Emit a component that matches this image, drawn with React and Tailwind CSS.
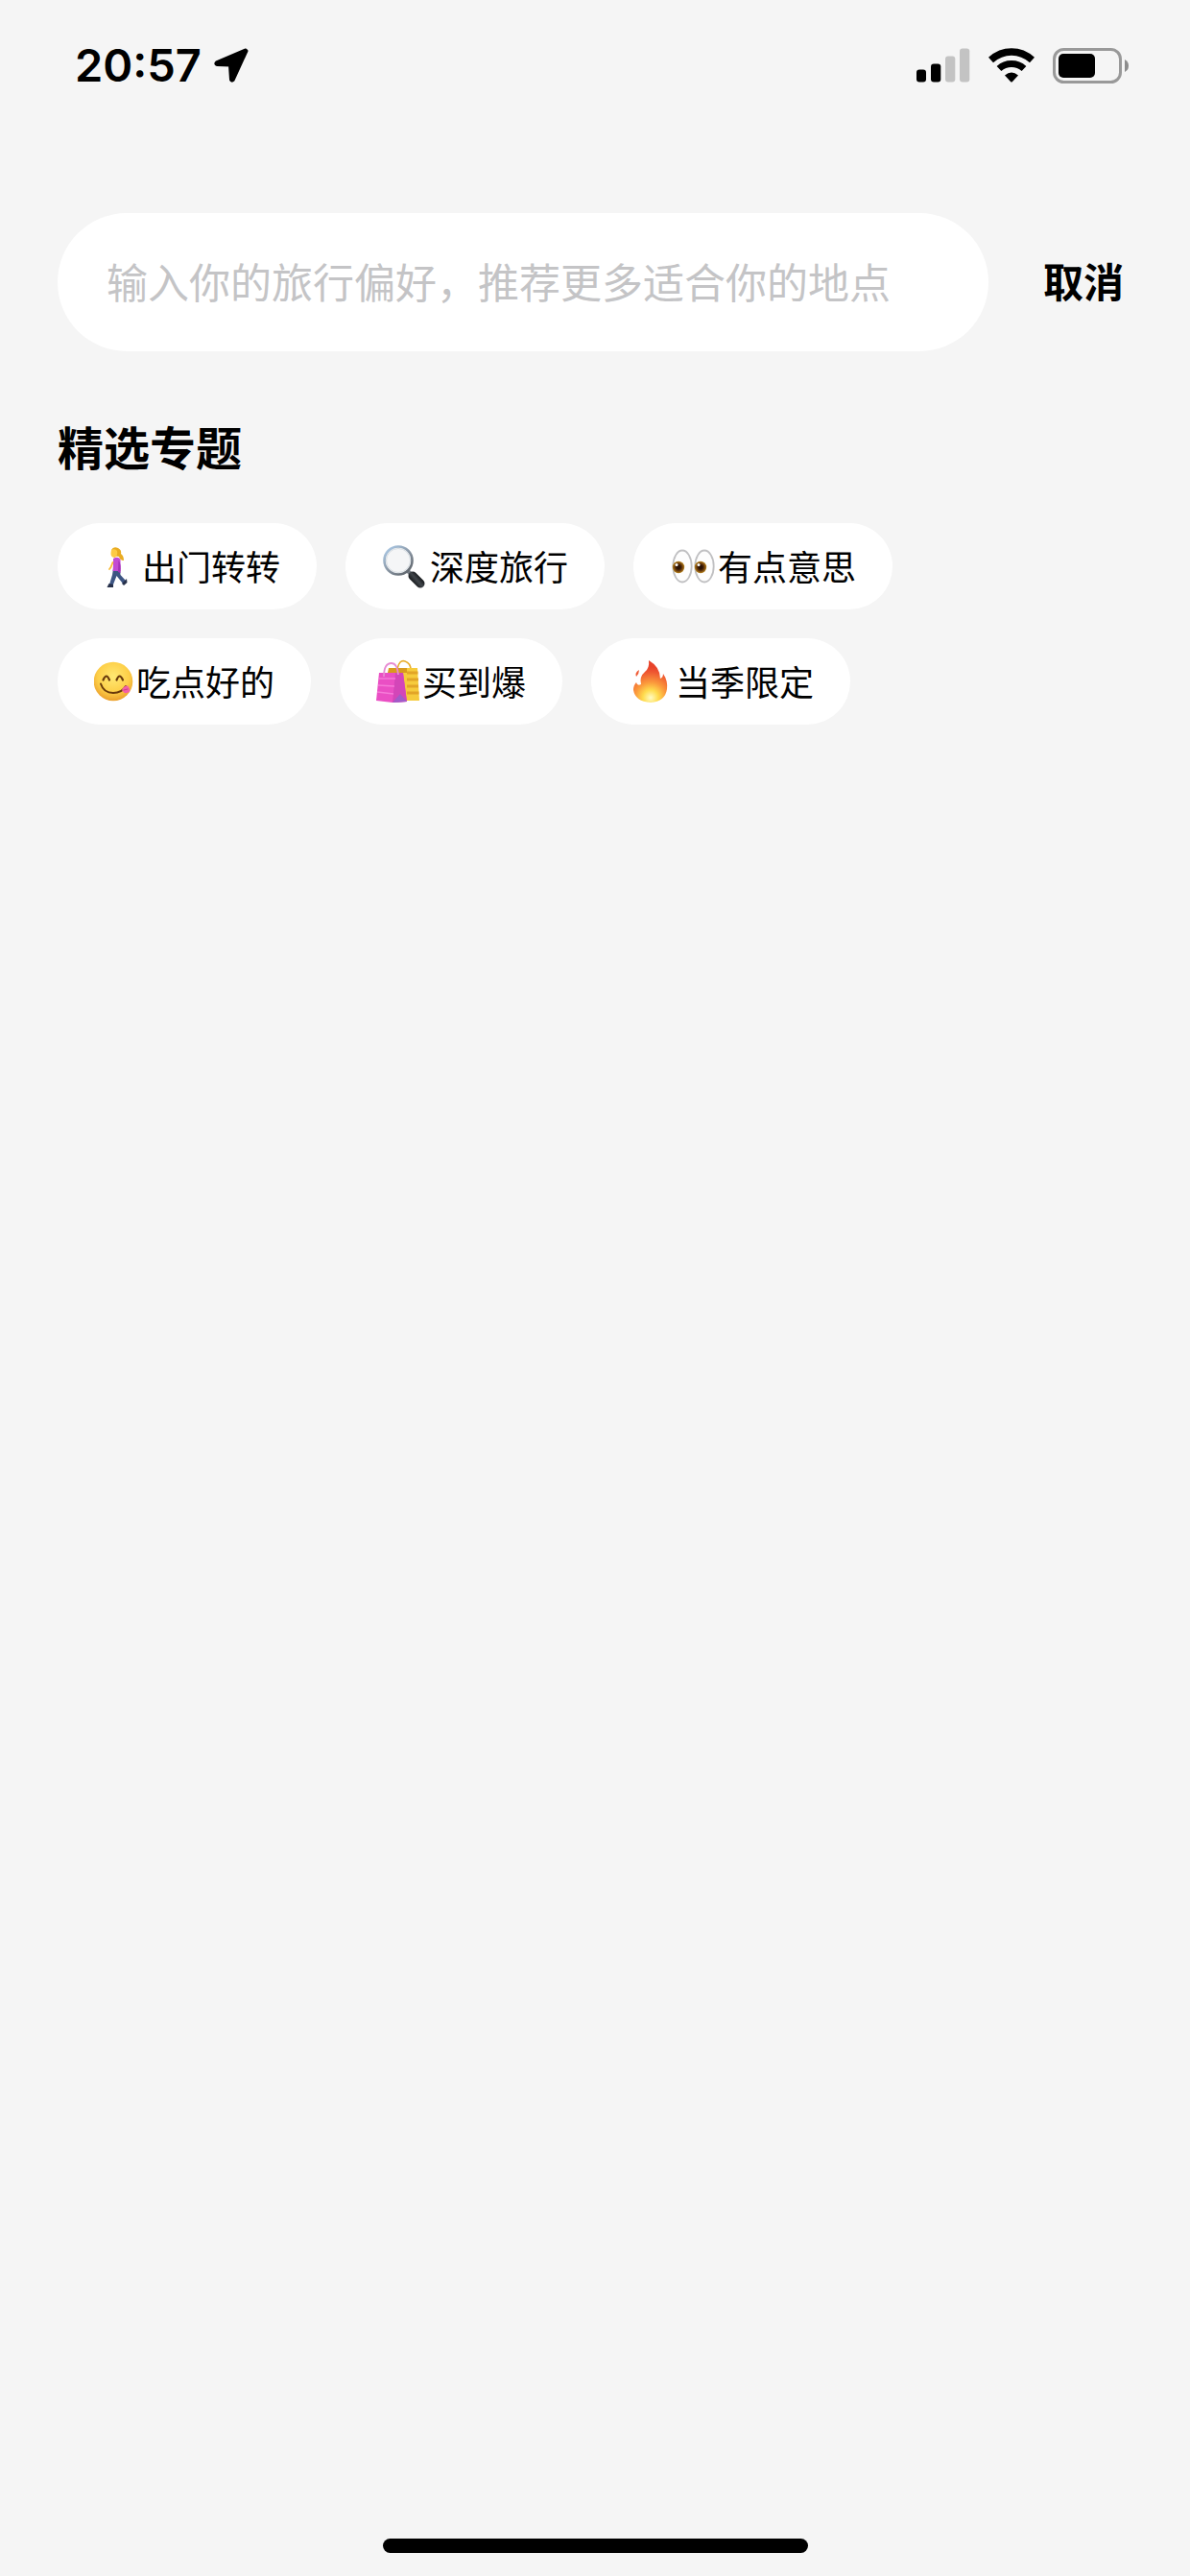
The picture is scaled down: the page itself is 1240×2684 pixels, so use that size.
import { useState } from 'react';

function WalkIcon() {
  return (
    <svg width="50" height="50" viewBox="0 0 50 50" fill="none" aria-hidden="true">
      {/* 头发 */}
      <path d="M18 8 Q20 4 25 6 Q29 8 28 12 Q31 14 31 19 Q27 19 26 15 L20 14 Z" fill="#e9ac22" />
      <path d="M18 8 Q22 6 24 9 Q25 13 22 16 Q17 16 17.500 11 Z" fill="#fccb45" />
      {/* 裤子 */}
      <path d="M20 28 H27 L27.500 34 L33 40 L30 43 L23.500 35 L20 44 L16 44 L19 34 Z" fill="#3d5583" />
      <path d="M15.500 43 L20 44 V47 H13.500 Z" fill="#26304a" />
      <path d="M32 40 L34 38 L34.500 42 L31 45 L29 43 Z" fill="#26304a" />
      {/* 上衣和手臂 */}
      <path d="M20 17 Q25 14 27.500 18 V30 H19.500 L20 24 Z" fill="#c34bd3" />
      <path d="M25.500 19 Q28.500 22 27.500 32 L25 31 Z" fill="#a432b8" />
      <path d="M19.500 21 L17.500 26 L16 28" stroke="#f8bb35" strokeWidth="1.800" strokeLinecap="round" />
    </svg>
  );
}

function MagnifierIcon() {
  return (
    <svg width="50" height="50" viewBox="0 0 50 50" fill="none" aria-hidden="true">
      <defs>
        <linearGradient id="handle" x1="31" y1="42" x2="39" y2="35" gradientUnits="userSpaceOnUse">
          <stop stopColor="#101214" />
          <stop offset="0.55" stopColor="#41464b" />
          <stop offset="1" stopColor="#14171a" />
        </linearGradient>
        <linearGradient id="rim" x1="6" y1="6" x2="28" y2="32" gradientUnits="userSpaceOnUse">
          <stop stopColor="#a9c6e2" />
          <stop offset="0.5" stopColor="#8b98a6" />
          <stop offset="1" stopColor="#5e646b" />
        </linearGradient>
      </defs>
      <path d="M27 30 L31 34" stroke="#777e86" strokeWidth="4" />
      <path d="M32 35 L40 43" stroke="url(#handle)" strokeWidth="9" strokeLinecap="round" />
      <circle cx="17" cy="19" r="14.500" fill="#f5f6f7" stroke="url(#rim)" strokeWidth="2.600" />
      <circle cx="17" cy="19" r="12.500" stroke="#d7dde2" strokeWidth="1" />
    </svg>
  );
}

function EyesIcon() {
  return (
    <svg width="50" height="50" viewBox="0 0 50 50" fill="none" aria-hidden="true">
      <defs>
        <radialGradient id="iris" cx="0.5" cy="0.5" r="0.5">
          <stop offset="0.3" stopColor="#2a1204" />
          <stop offset="0.65" stopColor="#6d3d0c" />
          <stop offset="1" stopColor="#b9851f" />
        </radialGradient>
      </defs>
      <ellipse cx="13" cy="25" rx="9.700" ry="16.500" fill="#fdfdfd" stroke="#c0c0c2" strokeWidth="1.800" />
      <ellipse cx="36" cy="25" rx="9.700" ry="16.500" fill="#fdfdfd" stroke="#c0c0c2" strokeWidth="1.800" />
      <circle cx="9" cy="26" r="6.200" fill="url(#iris)" />
      <circle cx="32" cy="26" r="6.200" fill="url(#iris)" />
      <circle cx="7" cy="23.500" r="1.500" fill="#fff" />
      <circle cx="30" cy="23.500" r="1.500" fill="#fff" />
    </svg>
  );
}

function YummyIcon() {
  return (
    <svg width="44" height="50" viewBox="0 0 44 50" fill="none" aria-hidden="true">
      <defs>
        <radialGradient id="face" cx="0.5" cy="0.38" r="0.62">
          <stop stopColor="#ffe873" />
          <stop offset="0.65" stopColor="#fdcf48" />
          <stop offset="1" stopColor="#eb9f2c" />
        </radialGradient>
      </defs>
      <circle cx="20" cy="25" r="20.300" fill="url(#face)" />
      <path d="M9.500 23.500 Q13 15.500 16 23.500" stroke="#6a3a0b" strokeWidth="2.200" strokeLinecap="round" />
      <path d="M23.500 23.500 Q26.500 15.500 30 23.500" stroke="#6a3a0b" strokeWidth="2.200" strokeLinecap="round" />
      <path d="M7 27.500 Q10 37 20 37 Q29 37 33 30" stroke="#6a3a0b" strokeWidth="2" strokeLinecap="round" />
      <path d="M29 34 Q31 29 35 29.500 Q38 33 37 36 Q33 38 31 36.500 Z" fill="#f45fa6" />
      <path d="M31 34 L35 33" stroke="#c93b85" strokeWidth="1" strokeLinecap="round" />
    </svg>
  );
}

function BagsIcon() {
  return (
    <svg width="48" height="50" viewBox="0 0 48 50" fill="none" aria-hidden="true">
      {/* 黄色袋子 */}
      <path d="M22 12 Q24 2 30 4 Q36 6 36 13" stroke="#e8ad2b" strokeWidth="1.600" />
      <path d="M13 11 H43 L45 45 H28 Z" fill="#f6cb3c" />
      <path d="M32 16 H43.500 M32 23 H44 M32 30 H44 M32 37 H44.500" stroke="#e2a527" strokeWidth="3" />
      <path d="M13 11 H32 V16 H12 Z" fill="#d99a1d" />
      {/* 粉色袋子 */}
      <path d="M3 16 H28 L32 46 L17 47 L0 45 Z" fill="#ea4fc4" />
      <path d="M20 16 H28 L32 46 L17 47 Z" fill="#d346b8" />
      <path d="M25 38 L32 46 L17 47 Z" fill="#a05cc9" />
      <path d="M3 22 L20 22 M2 29 L19 30 M1 36 L18 38" stroke="#f57ad8" strokeWidth="1.500" />
      <path d="M8 20 Q8 6 16 6 Q22 6 23 18" stroke="#e78bd3" strokeWidth="1.800" />
    </svg>
  );
}

function FireIcon() {
  return (
    <svg width="50" height="50" viewBox="0 0 50 50" fill="none" aria-hidden="true">
      <defs>
        <radialGradient id="flame" cx="24" cy="42" r="32" gradientUnits="userSpaceOnUse">
          <stop stopColor="#fffbc4" />
          <stop offset="0.25" stopColor="#ffdc4e" />
          <stop offset="0.5" stopColor="#fb9a3c" />
          <stop offset="0.85" stopColor="#ee5531" />
          <stop offset="1" stopColor="#e8432a" />
        </radialGradient>
      </defs>
      <path
        d="M22 3 Q34 10 34 22 Q37 21 37 17 Q42 24 41 33 Q39 46 24 47 Q8 46 6 34 Q6 29 9 26 Q10 30 14 28 Q12 20 18 15 Q23 11 22 3 Z"
        fill="url(#flame)"
      />
      <path d="M12 13 Q12 17 9 20 Q7 16 12 13 Z" fill="#ef5a35" />
    </svg>
  );
}

const topics = [
  { name: '出门转转', icon: WalkIcon },
  { name: '深度旅行', icon: MagnifierIcon },
  { name: '有点意思', icon: EyesIcon },
  { name: '吃点好的', icon: YummyIcon },
  { name: '买到爆', icon: BagsIcon },
  { name: '当季限定', icon: FireIcon },
];

function StatusBar() {
  return (
    <header className="flex h-[136px] items-center justify-between pl-[78px] pr-[63px]">
      <div className="flex items-center gap-3">
        <span className="font-['Inter',sans-serif] text-[47px] leading-[58px] font-semibold">20:57</span>
        <svg width="38" height="38" viewBox="0 0 38 38" aria-hidden="true">
          <path
            d="M34 3 L3.500 16 Q2 17.500 4 18.500 L17.500 19 L18.500 34 Q19.500 36 21 34.500 L35 4 Z"
            fill="#000"
            stroke="#000"
            strokeWidth="3"
            strokeLinejoin="round"
          />
        </svg>
      </div>
      <div className="flex items-center gap-[19px]">
        {/* 信号 */}
        <svg width="56" height="36" viewBox="0 0 56 36" aria-hidden="true">
          <rect x="0" y="22.500" width="10" height="13" rx="3" />
          <rect x="15" y="16.500" width="10.300" height="19" rx="3" />
          <rect x="30" y="8.500" width="10.300" height="27" rx="3" fill="#c3c3c3" />
          <rect x="45" y="0.500" width="10.300" height="35" rx="3" fill="#c3c3c3" />
        </svg>
        {/* Wi-Fi */}
        <svg width="48" height="36" viewBox="0 0 48 36" fill="none" aria-hidden="true">
          <path d="M2.500 12.500 Q12 4 24 4 Q36 4 45.500 12.500" stroke="#000" strokeWidth="7.500" />
          <path d="M11 21.500 Q16.500 16.500 24 16.500 Q31.500 16.500 37 21.500" stroke="#000" strokeWidth="7" />
          <path d="M17 28.500 Q24 22.500 31 28.500 L25 35 Q24 36 23 35 Z" fill="#000" />
        </svg>
        {/* 电量 */}
        <svg width="80" height="37" viewBox="0 0 80 37" fill="none" aria-hidden="true">
          <rect x="1.500" y="1.500" width="69" height="34" rx="10" stroke="#999" strokeWidth="3" />
          <rect x="6" y="6" width="38" height="25" rx="5" fill="#000" />
          <path d="M75 12 Q79 14 79 18.500 Q79 23 75 25 Z" fill="#8c8c8c" />
        </svg>
      </div>
    </header>
  );
}

export default function App() {
  const [keyword, setKeyword] = useState('');

  return (
    <div className="flex min-h-screen flex-col bg-[#f5f5f5] font-['Noto_Sans_CJK_SC',sans-serif] text-black">
      <StatusBar />

      <main className="flex-1 pt-[86px] pr-[69px] pl-[60px]">
        {/* 搜索栏 */}
        <div className="flex items-center gap-[57px]">
          <input
            type="text"
            aria-label="输入你的旅行偏好"
            value={keyword}
            onChange={(e) => setKeyword(e.target.value)}
            placeholder="输入你的旅行偏好，推荐更多适合你的地点"
            className="h-[144px] min-w-0 flex-1 rounded-full bg-white px-[51px] pb-1 text-[43px] outline-none placeholder:text-[#c4c4c6]"
          />
          <button type="button" onClick={() => setKeyword('')} className="shrink-0 pb-1 text-[42px] leading-[64px] font-bold">
            取消
          </button>
        </div>

        {/* 精选专题 */}
        <h2 className="mt-[66px] text-[48px] leading-[64px] font-bold">精选专题</h2>
        <div className="mt-[49px] flex flex-wrap gap-[30px]">
          {topics.map(({ name, icon: Icon }) => (
            <button
              key={name}
              type="button"
              onClick={() => setKeyword(name)}
              className="flex h-[90px] items-center rounded-full bg-white px-[38px] text-[36px]"
            >
              <Icon />
              <span className="pb-[3px]">{name}</span>
            </button>
          ))}
        </div>
      </main>

      <footer className="flex justify-center pb-6">
        <div className="h-[15px] w-[443px] rounded-full bg-black" />
      </footer>
    </div>
  );
}
